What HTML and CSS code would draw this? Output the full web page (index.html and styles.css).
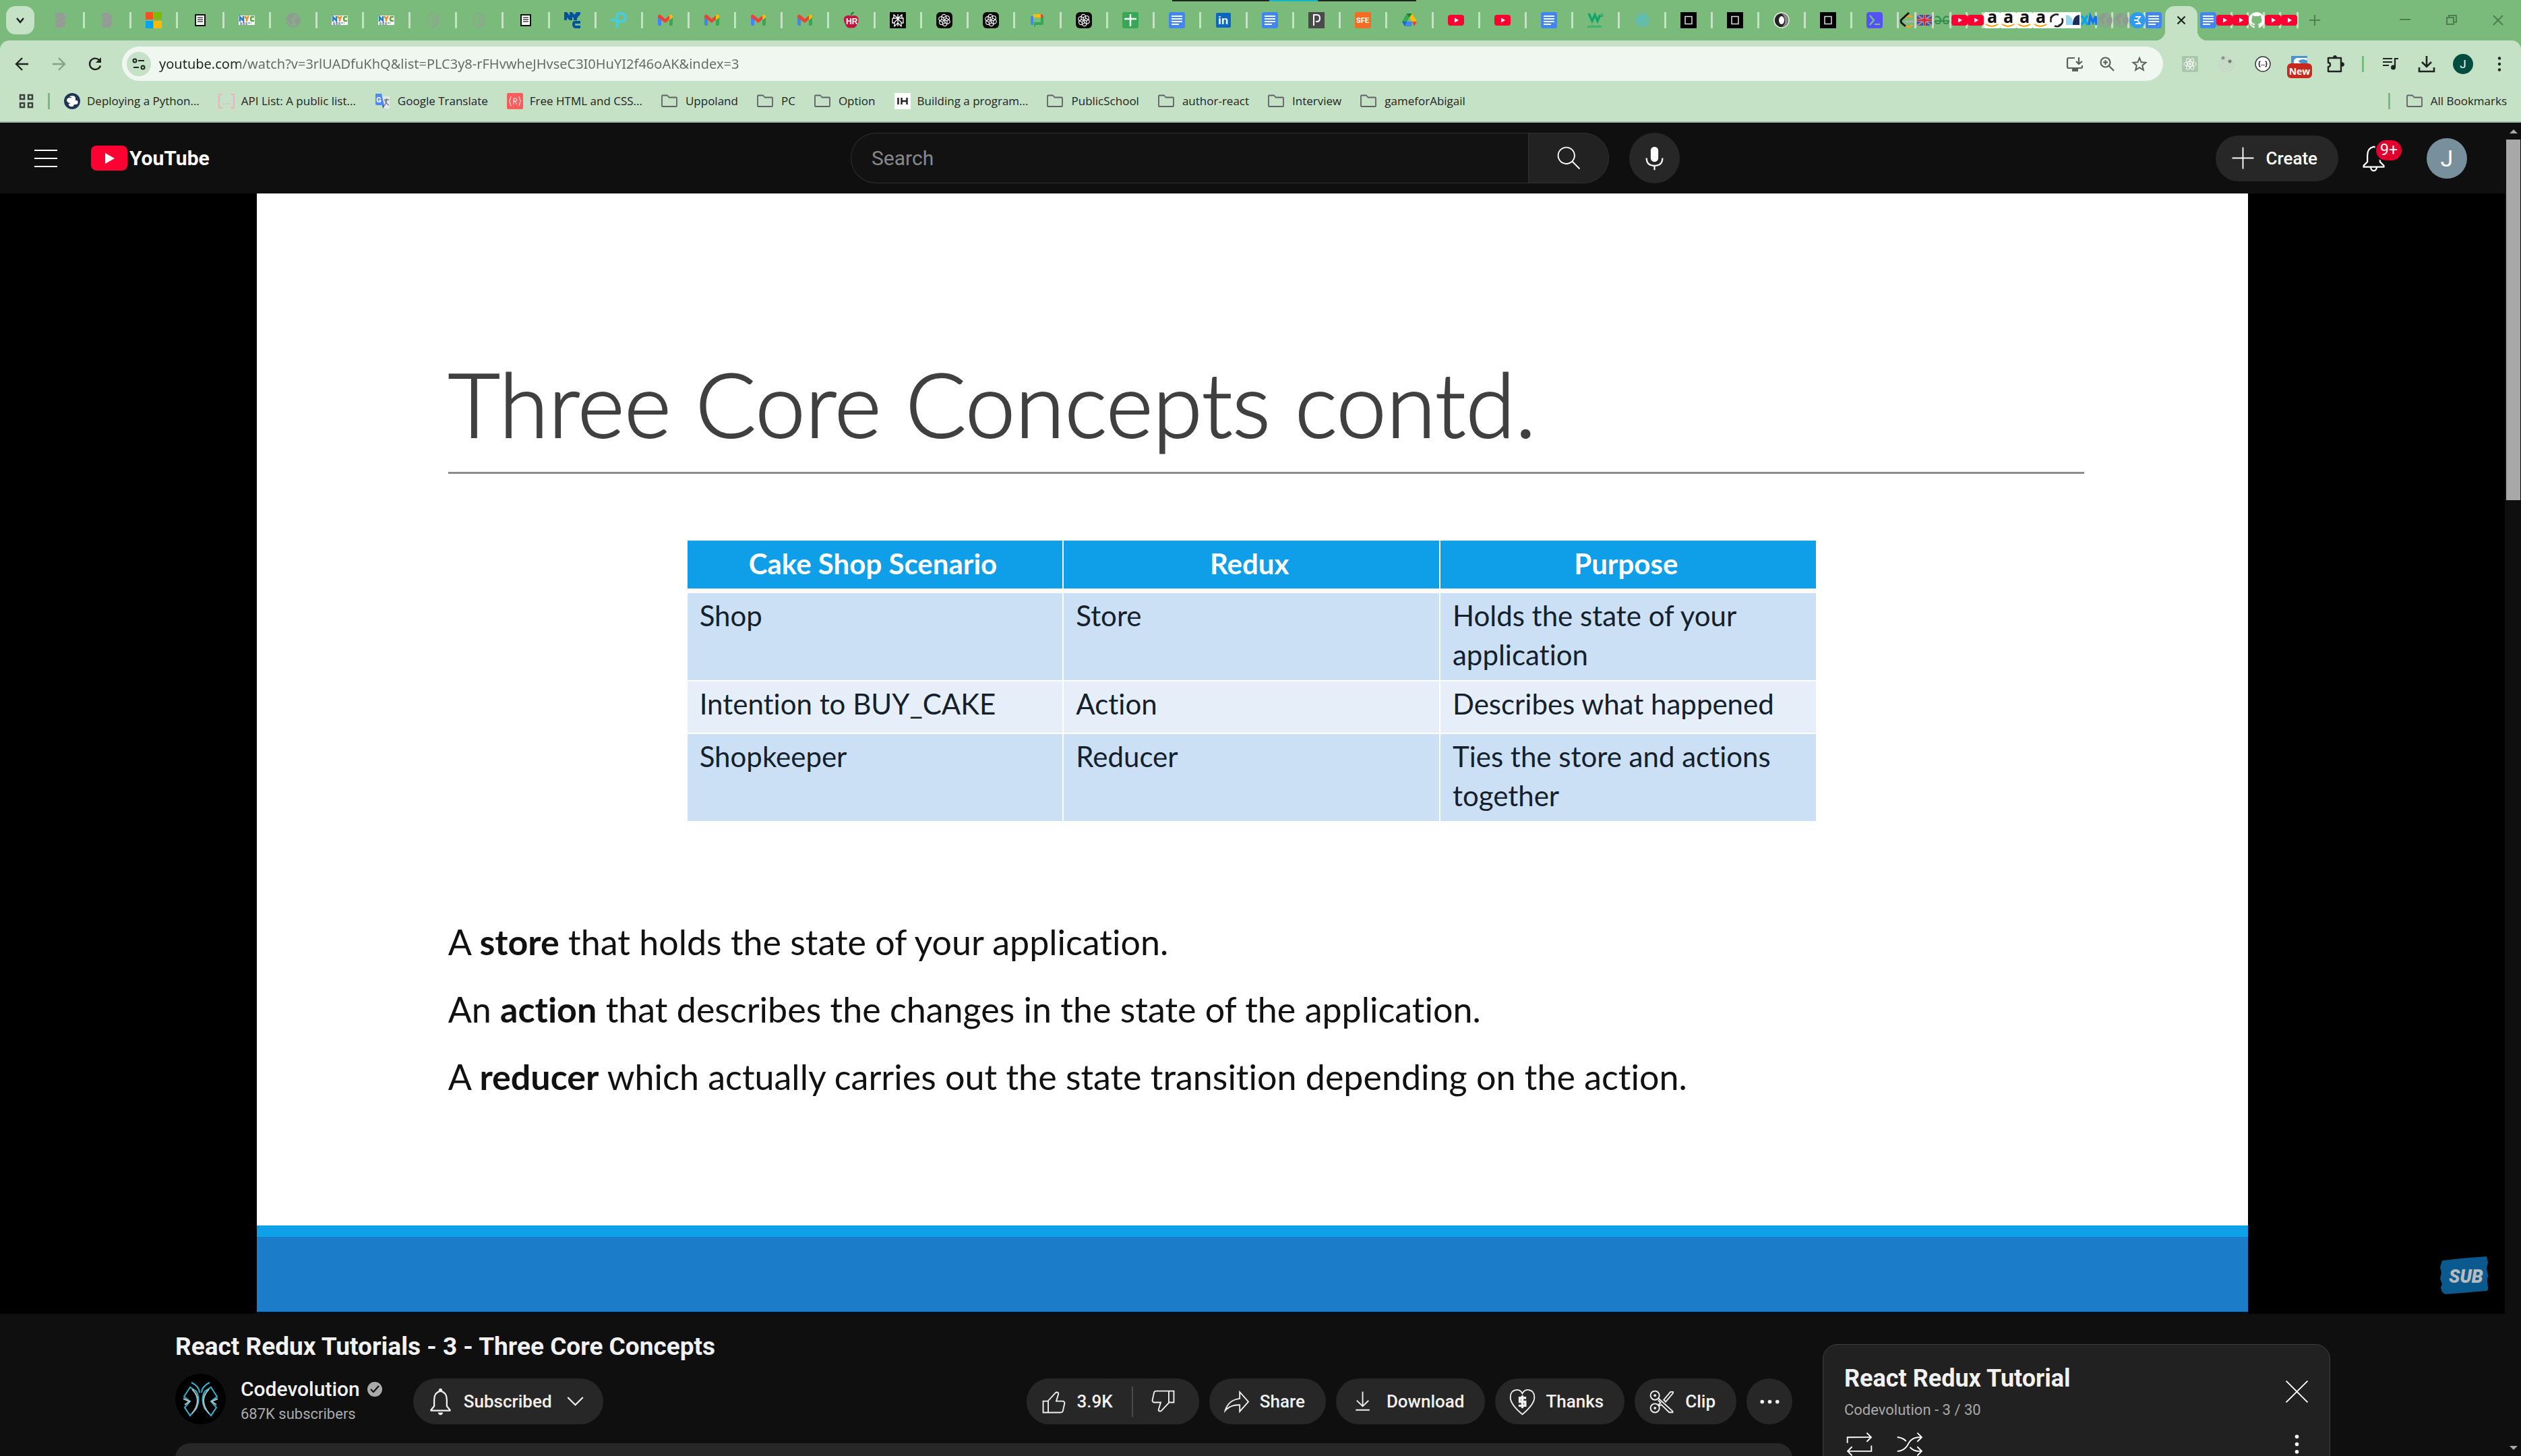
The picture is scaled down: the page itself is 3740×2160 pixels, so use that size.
FILE: index.html
```html
<!DOCTYPE html>
<html lang="en">
<head>
<meta charset="utf-8">
<title>React Redux Tutorials - 3 - Three Core Concepts</title>
<link rel="stylesheet" href="styles.css">
</head>
<body>
<svg class="defs" aria-hidden="true">
  <symbol id="f-b" viewBox="0 0 24 24"><path fill="#979b98" d="M4 1h11l4 4v5l-2 2 2 2v5l-4 4H4v-3l2-3-2-3 2-4-2-4z"/><path stroke="#7abb7c" d="M9 8l5-3M9 17l6-3"/></symbol>
  <symbol id="f-ms" viewBox="0 0 24 24"><path fill="#f25022" d="M0 0h11v11H0z"/><path fill="#7fba00" d="M12 0h12v11H12z"/><path fill="#00a4ef" d="M0 13h11v11H0z"/><path fill="#ffb900" d="M12 13h12v11H12z"/></symbol>
  <symbol id="f-page" viewBox="0 0 24 24"><path fill="#fff" stroke="#111" stroke-width="2" d="M5 4h14v16H5z"/><path stroke="#444" stroke-width="1.500" d="M8 8h8M8 11h8M8 14h8"/></symbol>
  <symbol id="f-nyc" viewBox="0 0 24 24"><path fill="#fff" d="M0 5h24v14H0z"/><path fill="none" stroke="#2a7fc4" stroke-width="2.600" d="M2 14V7l5 6V6"/><path fill="none" stroke="#f08a24" stroke-width="2.600" d="M9 6l3 4 3-4M12 9v5"/><path fill="none" stroke="#5aa83c" stroke-width="2.600" d="M23 7h-3q-2 0-2 3t2 3h3"/><path stroke="#3b4a86" stroke-width="1.200" d="M2 16h17M2 18h11" stroke-dasharray="3 1"/></symbol>
  <symbol id="f-globe" viewBox="0 0 24 24"><circle cx="12" cy="12" r="10" fill="#86ae87" stroke="#8f9b91" stroke-width="1.500"/><path fill="#8f9b91" d="M3 8l6-5 5 1-2 4-4 3 3 3-1 5-4-3zM15 8l5-1 2 6-4 6-3-3-2-3z"/></symbol>
  <symbol id="f-hex" viewBox="0 0 24 24"><path fill="none" stroke="#8ea690" stroke-width="1.500" d="M12 1l8 5v12l-8 5-8-5V6zM11 9l8-5M11 13l8-5M11 17l8-5M11 21l8-5"/></symbol>
  <symbol id="f-nyc2" viewBox="0 0 24 24"><path fill="#04529c" d="M0 0h4l4 5V0h4l3 4 3-4h6v3l-5 6v3h-5V9l-2-2v5H8L4 8v4H0z"/><path fill="none" stroke="#04529c" stroke-width="4" d="M24 15h-8q-2 0-2 3t2 4h8"/></symbol>
  <symbol id="f-p" viewBox="0 0 24 24"><path fill="none" stroke="#4acbd6" stroke-width="4" d="M9 24V6q0-4 5-4h2q6 0 6 6t-6 6h-5M0 12h9"/></symbol>
  <symbol id="f-gmail" viewBox="0 0 24 24"><path fill="#4285f4" d="M1 6l5 4v10H3q-2 0-2-2z"/><path fill="#34a853" d="M23 6l-5 4v10h3q2 0 2-2z"/><path fill="#ea4335" d="M1 6q1-4 5-1l6 5 6-5v6l-6 5-11-8z"/><path fill="#fbbc04" d="M18 5q4-3 5 1v2l-5 4z"/></symbol>
  <symbol id="f-hr" viewBox="0 0 24 24"><path fill="#c2123f" d="M2 7q5-4 10-1 6-3 10 2 2 5-2 12-4 5-8 3-5 2-8-3Q-1 12 2 7z"/><path stroke="#1d6b3a" stroke-width="2" d="M12 5q0-4 4-5" fill="none"/><text x="4" y="18" font-size="12" font-weight="700" fill="#fff" font-family="Liberation Sans">HR</text></symbol>
  <symbol id="f-perp" viewBox="0 0 24 24"><path d="M0 0h24v24H0z" fill="#0a0a0a"/><path fill="none" stroke="#fff" stroke-width="1.300" d="M12 3v18M6 4l6 5 6-5v5H6zM4 9h16v7h-3M4 9v7h3M12 10l-5 5v6l5-5 5 5v-6z"/></symbol>
  <symbol id="f-gpt" viewBox="0 0 24 24"><rect width="24" height="24" rx="6" fill="#0d0d0d"/><g fill="none" stroke="#fff" stroke-width="1.100"><path d="M11 12.500V8l4-2.300q4-1 4.500 3 0 1-.5 2.300l-4 2.300"/><path d="M11 12.500V8l4-2.300q4-1 4.500 3 0 1-.5 2.300l-4 2.300" transform="rotate(60 12 12)"/><path d="M11 12.500V8l4-2.300q4-1 4.500 3 0 1-.5 2.300l-4 2.300" transform="rotate(120 12 12)"/><path d="M11 12.500V8l4-2.300q4-1 4.500 3 0 1-.5 2.300l-4 2.300" transform="rotate(180 12 12)"/><path d="M11 12.500V8l4-2.300q4-1 4.500 3 0 1-.5 2.300l-4 2.300" transform="rotate(240 12 12)"/><path d="M11 12.500V8l4-2.300q4-1 4.500 3 0 1-.5 2.300l-4 2.300" transform="rotate(300 12 12)"/></g></symbol>
  <symbol id="f-chat" viewBox="0 0 24 24"><path fill="#4285f4" d="M2 6h4v13H4q-2 0-2-2z"/><path fill="#fbbc04" d="M6 3h11v5H6z"/><path fill="#ea4335" d="M17 3q4 0 4 5h-4z"/><path fill="#34a853" d="M17 8h4v9q0 2-2 2H10l-3 4v-8h10z"/></symbol>
  <symbol id="f-sheet" viewBox="0 0 24 24"><rect width="24" height="24" rx="3" fill="#34a853"/><path stroke="#fff" stroke-width="2.500" d="M3 10h18M12 3v18"/></symbol>
  <symbol id="f-doc" viewBox="0 0 24 24"><rect width="24" height="24" rx="3" fill="#4285f4"/><path stroke="#fff" stroke-width="2" d="M4 6h16M4 10h16M4 14h16M4 18h11"/></symbol>
  <symbol id="f-in" viewBox="0 0 24 24"><rect x="1" y="1" width="22" height="22" rx="2" fill="#0a66c2"/><text x="4" y="18" font-size="17" font-weight="700" fill="#fff" font-family="Liberation Sans">in</text></symbol>
  <symbol id="f-pp" viewBox="0 0 24 24"><path fill="#4a4a4a" d="M0 0h24v24H0z"/><path fill="none" stroke="#fff" stroke-width="2" d="M8 20V4h5q4 0 4 5t-4 5h-2"/></symbol>
  <symbol id="f-sfe" viewBox="0 0 24 24"><rect width="24" height="24" rx="2" fill="#f36d25"/><text x="2" y="16" font-size="11" font-weight="700" fill="#fff" font-family="Roboto">SFE</text></symbol>
  <symbol id="f-drive" viewBox="0 0 24 24"><path fill="#34a853" d="M8 2h4v5L5 20l-4-6z"/><path fill="#188038" d="M8 2h8l-4 6z"/><path fill="#fbbc04" d="M16 2l7 12h-7l-4-6z"/><path fill="#4285f4" d="M8 14h8l-1 7H5z"/><path fill="#ea4335" d="M16 14h7l-4 7z"/><path fill="#1967d2" d="M1 14h7l-3 7z"/></symbol>
  <symbol id="f-yt" viewBox="0 0 24 24"><rect y="4" width="24" height="16" rx="4" fill="#f03"/><path fill="#fff" d="M10 8.500v7l6-3.500z"/></symbol>
  <symbol id="f-w3" viewBox="0 0 24 24"><path fill="none" stroke="#12a66a" stroke-width="3.500" d="M2 2l5 11 4-9 4 9 4-9"/><text x="19" y="7" font-size="8" font-weight="700" fill="#12a66a" font-family="Roboto">3</text><text x="0" y="23" font-size="6" font-weight="700" fill="#12a66a" font-family="Roboto">schools</text></symbol>
  <symbol id="f-react" viewBox="0 0 24 24"><g fill="none" stroke="currentColor" stroke-width="1.200"><ellipse cx="12" cy="12" rx="11" ry="4.300"/><ellipse cx="12" cy="12" rx="11" ry="4.300" transform="rotate(60 12 12)"/><ellipse cx="12" cy="12" rx="11" ry="4.300" transform="rotate(120 12 12)"/></g><circle cx="12" cy="12" r="2.200" fill="currentColor"/></symbol>
  <symbol id="f-sq" viewBox="0 0 24 24"><path d="M0 0h24v24H0z"/><rect x="7" y="6.500" width="10" height="11" fill="none" stroke="#ddd" stroke-width="1.500"/></symbol>
  <symbol id="f-json" viewBox="0 0 24 24"><circle cx="12" cy="12" r="11" fill="#222" stroke="#eee" stroke-width="1.500"/><path fill="#888" d="M12 2a10 10 0 010 20q6-4 5-10-1-7-5-10z"/><ellipse cx="12" cy="12" rx="4" ry="6" fill="#fff"/></symbol>
  <symbol id="f-term" viewBox="0 0 24 24"><rect width="24" height="24" rx="4" fill="#5452f6"/><path fill="none" stroke="#79c77b" stroke-width="2.200" d="M5 5l6 7-6 7M12 18h8"/></symbol>
  <symbol id="f-leet" viewBox="0 0 24 24"><path fill="none" stroke="#ffa116" stroke-width="2.500" d="M10 20q5 5 10-1M10 8q5-5 10 0"/><path stroke="#b3b3b3" stroke-width="2.500" d="M9 14h13"/><path fill="none" stroke="#111" stroke-width="2.800" d="M15 1L4 11q-2 2 0 5l6 5"/></symbol>
  <symbol id="f-flag" viewBox="0 0 24 24"><path fill="#34549c" d="M1 4h22v16H1z"/><path stroke="#d9dbe0" stroke-width="2" d="M1 4l22 16M23 4L1 20"/><path stroke="#d9dbe0" stroke-width="4" d="M12 4v16M1 12h22"/><path stroke="#cf2a3a" stroke-width="3" d="M12 4v16M1 12h22"/><path stroke="#cf2a3a" d="M1 4l22 16M23 4L1 20"/></symbol>
  <symbol id="f-gg" viewBox="0 0 24 24"><path fill="none" stroke="#2f8d46" stroke-width="2" d="M2 7q8-2 8 6 0 4-4 4t-4-4h20q0 4-4 4t-4-4q0-8 8-6"/></symbol>
  <symbol id="f-amz" viewBox="0 0 24 24"><rect width="24" height="24" rx="3" fill="#fff"/><text x="5" y="16" font-size="25" font-weight="700" fill="#111" font-family="Open Sans">a</text><path fill="none" stroke="#ff9900" stroke-width="1.800" d="M3 18q9 6 18 0"/></symbol>
  <symbol id="f-sync" viewBox="0 0 24 24"><path fill="#fff" d="M0 0h24v24H0z"/><path fill="none" stroke="#222" stroke-width="2.500" d="M4 15A8.500 8.500 0 0115 4M9 20.500A8.500 8.500 0 0020 9M3 9q2-4 6-5M21 15q-2 4-6 5"/></symbol>
  <symbol id="f-m" viewBox="0 0 24 24"><path fill="#fff" d="M0 0h24v24H0z"/><path fill="#93d6f2" d="M2 4q9 1 10 10v5H2z"/><path fill="#1c2c5c" d="M12 19q0-14 10-15v15z"/></symbol>
  <symbol id="f-xm" viewBox="0 0 24 24"><path fill="none" stroke="#06a6ee" stroke-width="3.500" d="M1 5l9 14M10 5L1 19"/><path fill="none" stroke="#1673f0" stroke-width="3.500" d="M12 19l2-13 4 9 4-9 1 13"/></symbol>
  <symbol id="f-blue" viewBox="0 0 24 24"><circle cx="12" cy="12" r="12" fill="#2f9bf0"/><path fill="none" stroke="#fff" stroke-width="1.800" d="M9 7h7l-4 5 4 5H9M7 12h5"/></symbol>
  <symbol id="f-git" viewBox="0 0 24 24"><path fill="#fff" d="M12 0a12 12 0 00-4 23.400c.6.100.8-.3.800-.6v-2.200c-3.300.7-4-1.400-4-1.400-.6-1.400-1.400-1.800-1.400-1.800-1-.7.100-.7.100-.7 1.200.1 1.900 1.200 1.900 1.200 1 1.800 2.800 1.300 3.500 1 .1-.8.400-1.300.8-1.600-2.700-.3-5.500-1.300-5.500-5.900 0-1.300.5-2.400 1.200-3.200-.1-.3-.5-1.500.1-3.200 0 0 1-.3 3.300 1.200a11.500 11.500 0 016 0c2.300-1.500 3.300-1.200 3.300-1.200.7 1.700.2 2.900.1 3.200.8.800 1.200 1.900 1.200 3.200 0 4.600-2.800 5.600-5.500 5.900.4.400.8 1.100.8 2.200v3.300c0 .3.200.7.800.6A12 12 0 0012 0z"/></symbol>
  <symbol id="i-folder" viewBox="0 0 24 24"><path fill="none" stroke="#5f6368" stroke-width="1.800" stroke-linejoin="round" d="M1 4.500q0-1 1-1h7l2.500 3H22q1 0 1 1V19q0 1-1 1H2q-1 0-1-1z"/></symbol>
  <symbol id="i-like" viewBox="0 0 24 24"><path fill="currentColor" fill-rule="evenodd" d="M18.770 11h-4.230l1.520-4.940C16.380 5.030 15.540 4 14.380 4c-.58 0-1.140.24-1.520.65L7 11H3v10h14.430c1.060 0 1.980-.67 2.190-1.610l1.340-6C21.230 12.150 20.180 11 18.770 11zM7 20H4v-8h3v8zm12.980-6.830l-1.340 6c-.1.480-.61.830-1.210.83H8v-8.610l5.600-6.060c.19-.21.480-.33.780-.33.260 0 .5.110.63.300.07.100.15.260.09.470l-1.520 4.940-.4 1.290h5.580c.41 0 .8.170 1.030.46.130.15.260.4.190.71z"/></symbol>
</svg>

<header class="browser">
  <div class="screen-edge"></div>
  <div class="tabstrip">
    <button class="tab-search" aria-label="Search tabs"><svg width="14" height="14" viewBox="0 0 14 14"><path fill="none" stroke="#1f1f1f" stroke-width="2.500" d="M2 4l5 6 5-6"/></svg></button>
    <ul class="tabs">
      <li class="tab"><svg><use href="#f-b"/></svg></li>
      <li class="tab"><svg><use href="#f-b"/></svg></li>
      <li class="tab"><svg><use href="#f-ms"/></svg></li>
      <li class="tab"><svg><use href="#f-page"/></svg></li>
      <li class="tab"><svg><use href="#f-nyc"/></svg></li>
      <li class="tab"><svg><use href="#f-globe"/></svg></li>
      <li class="tab"><svg><use href="#f-nyc"/></svg></li>
      <li class="tab"><svg><use href="#f-nyc"/></svg></li>
      <li class="tab"><svg><use href="#f-hex"/></svg></li>
      <li class="tab"><svg><use href="#f-hex"/></svg></li>
      <li class="tab"><svg><use href="#f-page"/></svg></li>
      <li class="tab"><svg><use href="#f-nyc2"/></svg></li>
      <li class="tab"><svg><use href="#f-p"/></svg></li>
      <li class="tab"><svg><use href="#f-gmail"/></svg></li>
      <li class="tab"><svg><use href="#f-gmail"/></svg></li>
      <li class="tab"><svg><use href="#f-gmail"/></svg></li>
      <li class="tab"><svg><use href="#f-gmail"/></svg></li>
      <li class="tab"><svg><use href="#f-hr"/></svg></li>
      <li class="tab"><svg><use href="#f-perp"/></svg></li>
      <li class="tab"><svg><use href="#f-gpt"/></svg></li>
      <li class="tab"><svg><use href="#f-gpt"/></svg></li>
      <li class="tab"><svg><use href="#f-chat"/></svg></li>
      <li class="tab"><svg><use href="#f-gpt"/></svg></li>
      <li class="tab"><svg><use href="#f-sheet"/></svg></li>
      <li class="tab"><svg><use href="#f-doc"/></svg></li>
      <li class="tab"><svg><use href="#f-in"/></svg></li>
      <li class="tab"><svg><use href="#f-doc"/></svg></li>
      <li class="tab"><svg><use href="#f-pp"/></svg></li>
      <li class="tab"><svg><use href="#f-sfe"/></svg></li>
      <li class="tab"><svg><use href="#f-drive"/></svg></li>
      <li class="tab"><svg><use href="#f-yt"/></svg></li>
      <li class="tab"><svg><use href="#f-yt"/></svg></li>
      <li class="tab"><svg><use href="#f-doc"/></svg></li>
      <li class="tab"><svg><use href="#f-w3"/></svg></li>
      <li class="tab sky"><svg><use href="#f-react"/></svg></li>
      <li class="tab"><svg><use href="#f-sq"/></svg></li>
      <li class="tab"><svg><use href="#f-sq"/></svg></li>
      <li class="tab"><svg><use href="#f-json"/></svg></li>
      <li class="tab"><svg><use href="#f-sq"/></svg></li>
      <li class="tab"><svg><use href="#f-term"/></svg></li>
      <li class="tab mid"><svg><use href="#f-leet"/></svg></li>
      <li class="tab mid"><svg><use href="#f-flag"/></svg></li>
      <li class="tab mid"><svg><use href="#f-gg"/></svg></li>
      <li class="tab slim"><svg><use href="#f-yt"/></svg></li>
      <li class="tab slim"><svg><use href="#f-yt"/></svg></li>
      <li class="tab slim"><svg><use href="#f-amz"/></svg></li>
      <li class="tab slim"><svg><use href="#f-amz"/></svg></li>
      <li class="tab slim"><svg><use href="#f-amz"/></svg></li>
      <li class="tab slim"><svg><use href="#f-amz"/></svg></li>
      <li class="tab slim"><svg><use href="#f-sync"/></svg></li>
      <li class="tab slim"><svg><use href="#f-m"/></svg></li>
      <li class="tab slim"><svg><use href="#f-xm"/></svg></li>
      <li class="tab slim"><svg><use href="#f-globe"/></svg></li>
      <li class="tab slim"><svg><use href="#f-globe"/></svg></li>
      <li class="tab slim"><svg><use href="#f-blue"/></svg></li>
      <li class="tab slim before-active"><svg><use href="#f-doc"/></svg></li>
      <li class="tab active"><button aria-label="Close tab"><svg viewBox="0 0 24 24"><path stroke="#1f1f1f" stroke-width="2.200" d="M6.500 6.500l11 11M17.500 6.500l-11 11"/></svg></button></li>
      <li class="tab slim"><svg><use href="#f-doc"/></svg></li>
      <li class="tab slim"><svg><use href="#f-yt"/></svg></li>
      <li class="tab slim"><svg><use href="#f-yt"/></svg></li>
      <li class="tab slim"><svg><use href="#f-git"/></svg></li>
      <li class="tab slim"><svg><use href="#f-yt"/></svg></li>
      <li class="tab mid"><svg><use href="#f-yt"/></svg></li>
    </ul>
    <button class="new-tab" aria-label="New tab"><svg width="16" height="16" viewBox="0 0 16 16"><path stroke="#4c7f50" stroke-width="2" d="M8 0v16M0 8h16"/></svg></button>
    <div class="window-controls">
      <button aria-label="Minimize"><svg width="16" height="16" viewBox="0 0 16 16"><path stroke="#4c7f50" stroke-width="2" d="M0 7h16"/></svg></button>
      <button aria-label="Restore"><svg width="16" height="16" viewBox="0 0 16 16"><path fill="none" stroke="#4c7f50" stroke-width="2" d="M1 4h10v10H1zM4 4V1h11v10h-4"/></svg></button>
      <button aria-label="Close"><svg width="16" height="16" viewBox="0 0 16 16"><path stroke="#4c7f50" stroke-width="2" d="M1 1l14 14M15 1L1 15"/></svg></button>
    </div>
  </div>

  <div class="toolbar">
    <button class="tool" aria-label="Back"><svg width="24" height="24" viewBox="0 0 24 24"><path fill="none" stroke="#1f2420" stroke-width="2.400" d="M21 12H4M12 3l-9 9 9 9"/></svg></button>
    <button class="tool" aria-label="Forward"><svg width="24" height="24" viewBox="0 0 24 24"><path fill="none" stroke="#84a287" stroke-width="2.400" d="M3 12h17M12 3l9 9-9 9"/></svg></button>
    <button class="tool" aria-label="Reload"><svg width="24" height="24" viewBox="0 0 24 24"><path fill="none" stroke="#1f2420" stroke-width="2.400" d="M20 14.500a8.200 8.200 0 11-2-8.500l2 2"/><path fill="#1f2420" d="M21 2v8h-8z"/></svg></button>
    <div class="omnibox">
      <button class="site-info" aria-label="Site information"><svg width="20" height="20" viewBox="0 0 20 20"><g fill="none" stroke="#1f2420" stroke-width="2"><circle cx="4" cy="5" r="2.500"/><path d="M9 5h9M2 15h8"/><circle cx="16" cy="15" r="2.500"/></g></svg></button>
      <input class="url" type="text" aria-label="Address" value="youtube.com/watch?v=3rlUADfuKhQ&amp;list=PLC3y8-rFHvwheJHvseC3I0HuYI2f46oAK&amp;index=3">
      <button class="omni-btn" aria-label="Install"><svg width="26" height="24" viewBox="0 0 26 24"><path fill="none" stroke="#5a5f5b" stroke-width="2.200" d="M13 3H4q-2 0-2 2v11q0 2 2 2h18q2 0 2-2v-2M19 2v9M15 8l4 4 5-4"/><path fill="#5a5f5b" d="M9 18h9v5H9z"/></svg></button>
      <button class="omni-btn" aria-label="Zoom"><svg width="24" height="24" viewBox="0 0 24 24"><g fill="none" stroke="#5a5f5b" stroke-width="2.200"><circle cx="9.500" cy="9.500" r="7"/><path d="M14.500 14.500l7.500 7.500M6 9.500h7M9.500 6v7"/></g></svg></button>
      <button class="omni-btn" aria-label="Bookmark this tab"><svg width="24" height="24" viewBox="0 0 24 24"><path fill="none" stroke="#5a5f5b" stroke-width="2" d="M12 3l2.600 6.300 6.800.5-5.200 4.400 1.600 6.600-5.800-3.600-5.800 3.600 1.600-6.600-5.200-4.400 6.800-.5z"/></svg></button>
    </div>
    <button class="tool" aria-label="React Developer Tools"><svg class="react-ext" width="24" height="24" viewBox="0 0 24 24"><rect width="24" height="24" rx="2" fill="#a9c8ab"/><use href="#f-react" x="2" y="2" width="20" height="20"/></svg></button>
    <button class="tool" aria-label="Extension"><svg width="24" height="24" viewBox="0 0 24 24"><g fill="none" stroke="#c9cfcb" stroke-width="1.500" stroke-dasharray="5 1"><circle cx="12" cy="13" r="10.500"/><circle cx="12" cy="13" r="6"/></g><circle cx="12" cy="13" r="2.500" fill="#cfd2d0"/><circle cx="7" cy="3" r="2.500" fill="#8f9490"/><circle cx="17" cy="8" r="2.500" fill="#767b77"/></svg></button>
    <button class="tool" aria-label="JSON viewer"><svg width="24" height="24" viewBox="0 0 24 24"><circle cx="12" cy="12" r="11" fill="#fff" stroke="#3a3d3b" stroke-width="1.500"/><path fill="none" stroke="#222" stroke-width="1.500" d="M8.500 8q-2 0-1.800 2 .2 2-1.200 2 1.400 0 1.200 2-.2 2 1.800 2M15.500 8q2 0 1.800 2-.2 2 1.200 2-1.400 0-1.200 2 .2 2-1.800 2M9.500 13.500h1.200M11.700 13.500h1.200M13.700 13.500h1"/></svg></button>
    <button class="tool ext-new" aria-label="Extension with update"><svg width="24" height="24" viewBox="0 0 24 24"><path fill="#fff" stroke="#8aa9c4" d="M0 0h24v24H0z"/><path fill="#4b93cf" d="M0 0h24v3H8q-5 2-4 8H0zM24 11h-8q-5-1-5-4 7-4 13 0z"/></svg><span class="badge-new">New</span></button>
    <button class="tool" aria-label="Extensions"><svg width="26" height="26" viewBox="0 0 26 26"><path fill="none" stroke="#1f2420" stroke-width="2.400" stroke-linejoin="round" d="M4 4h17v20H2v-7q3 0 3-3t-3-3V4h3"/><path fill="#1f2420" d="M9 4q0-4 3-4t3 4zM21 10q5 0 5 3.500T21 17z"/></svg></button>
    <span class="divider"></span>
    <button class="tool" aria-label="Media controls"><svg width="24" height="24" viewBox="0 0 24 24"><path fill="none" stroke="#1f2420" stroke-width="2.200" d="M1 4h14M1 9h14M1 14h9M19 17V4h5"/><circle cx="16.500" cy="17" r="3.500" fill="#1f2420"/></svg></button>
    <button class="tool" aria-label="Downloads"><svg width="26" height="26" viewBox="0 0 26 26"><path fill="none" stroke="#1f2420" stroke-width="2.600" d="M13 1v15M6 10l7 7 7-7M2 18v6h22v-6"/></svg></button>
    <button class="tool" aria-label="Profile"><span class="profile">J</span></button>
    <button class="tool" aria-label="Menu"><svg width="24" height="24" viewBox="0 0 24 24" fill="#1f2420"><circle cx="12" cy="3.500" r="2.200"/><circle cx="12" cy="12" r="2.200"/><circle cx="12" cy="20.500" r="2.200"/></svg></button>
  </div>

  <nav class="bookmarks" aria-label="Bookmarks">
    <button class="apps" aria-label="Apps"><svg width="22" height="22" viewBox="0 0 22 22"><path fill="none" stroke="#3a423c" stroke-width="2.400" d="M2 2h6v6H2zM14 2h6v6h-6zM2 14h6v6H2zM14 14h6v6h-6z"/></svg></button>
    <span class="bm-divider"></span>
    <a href="#" class="bm"><svg viewBox="0 0 24 24"><circle cx="12" cy="12" r="12" fill="#1d3557"/><path fill="#fff" d="M12 4q5 0 5 4v3h3q2 6-3 6h-2q-1 4-5 3-4-1-3-4l3-1q-5 0-6-4 0-3 3-4h4V6H8q1-2 4-2z"/></svg>Deploying a Python...</a>
    <a href="#" class="bm"><svg viewBox="0 0 24 24"><path fill="none" stroke="#f0b0c4" stroke-width="2" d="M6 2H1v20h5M18 2h5v20h-5"/><path stroke="#f0b0c4" stroke-width="2" stroke-dasharray="2 2" d="M7 16h11"/></svg>API List: A public list...</a>
    <a href="#" class="bm"><svg viewBox="0 0 24 24"><path fill="#e4e8ec" d="M10 5h12v18H14z"/><path fill="#4b8af5" d="M1 1h9l4 17H3q-2 0-2-2z"/><path fill="#3a5bc0" d="M11 18h4l-3 5z"/><text x="2" y="14" font-size="11" font-weight="700" fill="#fff" font-family="Roboto">G</text><path stroke="#6b7880" stroke-width="1.300" fill="none" d="M14 10h7M17.500 8v2q0 5-3 8M15 11q2 5 6 7"/></svg>Google Translate</a>
    <a href="#" class="bm"><svg viewBox="0 0 24 24"><rect width="24" height="24" rx="2" fill="#fb5b5b"/><path fill="none" stroke="#fff" d="M7 5q-2 0-2 3 0 4-2 4 2 0 2 4 0 3 2 3M17 5q2 0 2 3 0 4 2 4-2 0-2 4 0 3-2 3M10 17V8h3q2 0 2 2t-2 2h-3 2l3 5"/></svg>Free HTML and CSS...</a>
    <a href="#" class="bm folder"><svg><use href="#i-folder"/></svg>Uppoland</a>
    <a href="#" class="bm folder"><svg><use href="#i-folder"/></svg>PC</a>
    <a href="#" class="bm folder"><svg><use href="#i-folder"/></svg>Option</a>
    <a href="#" class="bm"><svg viewBox="0 0 24 24"><path fill="#fff" d="M0 0h24v24H0z"/><path stroke="#222" stroke-width="2.500" d="M5.500 7v10M10.500 7v10M18.500 7v10M10 12h9"/></svg>Building a program...</a>
    <a href="#" class="bm folder"><svg><use href="#i-folder"/></svg>PublicSchool</a>
    <a href="#" class="bm folder"><svg><use href="#i-folder"/></svg>author-react</a>
    <a href="#" class="bm folder"><svg><use href="#i-folder"/></svg>Interview</a>
    <a href="#" class="bm folder"><svg><use href="#i-folder"/></svg>gameforAbigail</a>
    <span class="bm-divider push"></span>
    <a href="#" class="bm folder"><svg><use href="#i-folder"/></svg>All Bookmarks</a>
  </nav>
</header>

<div class="viewport">
  <div class="page">
    <header class="masthead">
      <div class="start">
        <button class="guide" aria-label="Guide"><svg width="36" height="28" viewBox="0 0 36 28"><path stroke="#fff" stroke-width="2" d="M1 2h34M1 14h34M1 26h34"/></svg></button>
        <a class="logo" href="#"><svg width="54" height="37" viewBox="0 0 54 37"><rect width="54" height="37" rx="8" fill="#f03"/><path fill="#fff" d="M21 11v16l14-8z"/></svg>YouTube</a>
      </div>
      <form class="search">
        <input type="search" placeholder="Search" aria-label="Search">
        <button type="button" class="go" aria-label="Search"><svg width="45" height="45" viewBox="0 0 24 24"><path fill="#fff" fill-rule="evenodd" d="M20.870 20.170l-5.590-5.590C16.350 13.350 17 11.750 17 10c0-3.870-3.130-7-7-7s-7 3.130-7 7 3.130 7 7 7c1.750 0 3.350-.65 4.580-1.710l5.590 5.590.7-.71zM10 16c-3.310 0-6-2.690-6-6s2.690-6 6-6 6 2.690 6 6-2.690 6-6 6z"/></svg></button>
        <button type="button" class="mic" aria-label="Search with your voice"><svg width="45" height="45" viewBox="0 0 24 24"><rect x="9" y="3" width="6" height="12" rx="3" fill="#fff"/><path fill="none" stroke="#fff" stroke-width="1.200" d="M5.700 12q0 6 6.300 6t6.300-6M12 18v3.500"/></svg></button>
      </form>
      <div class="end">
        <button class="create"><svg width="45" height="45" viewBox="0 0 24 24"><path stroke="#fff" d="M12 3.500v17M3.500 12h17"/></svg>Create</button>
        <button class="bell" aria-label="Notifications"><svg width="45" height="45" viewBox="0 0 24 24"><path fill="none" stroke="#fff" stroke-width="1.200" stroke-linejoin="round" d="M12 3q-5 1-5 7v5l-3 3v1h16v-1l-3-3v-5q0-6-5-7zM9.500 19q.5 3 2.500 3t2.500-3"/></svg><span class="count">9+</span></button>
        <button class="me" aria-label="Account">J</button>
      </div>
    </header>

    <section class="theater" aria-label="Video player">
      <article class="slide">
        <h2>Three Core Concepts contd.</h2>
        <table>
          <thead><tr><th>Cake Shop Scenario</th><th>Redux</th><th>Purpose</th></tr></thead>
          <tbody>
            <tr><td>Shop</td><td>Store</td><td>Holds the state of your application</td></tr>
            <tr><td>Intention to BUY_CAKE</td><td>Action</td><td>Describes what happened</td></tr>
            <tr><td>Shopkeeper</td><td>Reducer</td><td>Ties the store and actions together</td></tr>
          </tbody>
        </table>
        <div class="points">
          <p>A <b>store</b> that holds the state of your application.</p>
          <p>An <b>action</b> that describes the changes in the state of the application.</p>
          <p>A <b>reducer</b> which actually carries out the state transition depending on the action.</p>
        </div>
        <div class="band"></div>
      </article>
      <svg class="watermark" width="72" height="56" viewBox="0 0 72 56"><path fill="#0b5a8f" d="M3 6l10-1 8-1 20-2 28-2 2 9-2 8 2 10-1 9 1 11-1 4-14 1-22 2-26 2-5-3-2-7 2-5-3-8 2-9-2-8z"/><text x="13" y="39" font-family="Roboto" font-weight="900" font-style="italic" font-size="27" fill="#b9bcbe">SUB</text></svg>
    </section>

    <main class="below">
      <div class="primary">
        <h1>React Redux Tutorials - 3 - Three Core Concepts</h1>
        <div class="meta">
          <svg class="avatar" width="75" height="75" viewBox="0 0 75 75"><circle cx="37.500" cy="37.500" r="37.500" fill="#000"/><g fill="none" stroke-width="2"><path stroke="#2fb4cf" d="M24 13q12 6 12 15M51 13q-12 6-12 15M22 20L13 34l9 7-8 9 8 12 9-10q7-15 0-26zM53 20l9 14-9 7 8 9-8 12-9-10q-7-15 0-26z"/><path stroke="#b8bec0" d="M25 23q16 16 0 36M50 23q-16 16 0 36M12 37l9 4-7 5M63 37l-9 4 7 5"/></g></svg>
          <div class="owner">
            <a href="#" class="channel">Codevolution<svg width="22" height="22" viewBox="0 0 22 22"><circle cx="11" cy="11" r="11" fill="#aaa"/><path fill="none" stroke="#0f0f0f" stroke-width="2.200" d="M5 11l4 4 8-9"/></svg></a>
            <span class="subs">687K subscribers</span>
          </div>
          <button class="pill subscribed"><svg viewBox="0 0 24 24"><path fill="none" stroke="#f1f1f1" stroke-width="1.200" stroke-linejoin="round" d="M12 3.500q-5 1-5 7v5l-2.500 3v.5h15v-.5L17 15.500v-5q0-6-5-7z"/><path fill="#f1f1f1" d="M10.500 3.500q0-2 1.500-2t1.500 2zM10 20.500h4q-.5 2-2 2t-2-2z"/></svg>Subscribed<svg viewBox="0 0 24 24"><path fill="none" stroke="#f1f1f1" stroke-width="1.200" d="M6 8.500l6 6 6-6"/></svg></button>
          <div class="actions">
            <div class="rate">
              <button class="pill like"><svg><use href="#i-like"/></svg>3.9K</button>
              <button class="pill dislike" aria-label="Dislike"><svg><use href="#i-like"/></svg></button>
            </div>
            <button class="pill"><svg viewBox="0 0 24 24"><path fill="#f1f1f1" fill-rule="evenodd" d="M15 5.630L20.660 12 15 18.370V14h-1c-3.960 0-7.140 1-9.750 3.090 1.840-4.070 5.110-6.400 9.890-7.100l.86-.13V5.630M14 3v6C6.220 10.130 3.110 15.330 2 21c2.780-3.970 6.440-6 12-6v6l8-9-8-9z"/></svg>Share</button>
            <button class="pill"><svg viewBox="0 0 24 24"><path fill="#f1f1f1" d="M17 18v1H6v-1h11zm-.5-6.600l-.7-.7-3.800 3.700V4h-1v10.400l-3.800-3.800-.7.7 5 5 5-4.900z"/></svg>Download</button>
            <button class="pill"><svg viewBox="0 0 24 24"><path fill="none" stroke="#f1f1f1" d="M12 22Q2.500 14 2.500 8.500 2.500 3 7.500 2.600 10.500 2.500 12 5.500q1.500-3 4.500-2.900 5 .4 5 5.900Q21.500 14 12 22z"/><path fill="none" stroke="#f1f1f1" stroke-width="1.800" d="M15 8.900H9.900V12h4.400v3.100H9M12 7v10"/></svg>Thanks</button>
            <button class="pill"><svg viewBox="0 0 24 24"><g fill="none" stroke="#f1f1f1"><circle cx="6.500" cy="7" r="3.500"/><circle cx="6.500" cy="17" r="3.500"/><path d="M9.300 9.300L20.500 19.500v.9h-2.700l-6.300-6.100-2.200 1.100M9.200 14.500L11 12.800l-2-2M13.500 10.500L18.800 4.200h2v1L15 12z"/></g><circle cx="6.500" cy="7" r="1" fill="#f1f1f1"/><circle cx="6.500" cy="17" r="1" fill="#f1f1f1"/></svg>Clip</button>
            <button class="pill more" aria-label="More actions"><svg viewBox="0 0 24 24" fill="#f1f1f1"><circle cx="6" cy="12" r="1.500"/><circle cx="12" cy="12" r="1.500"/><circle cx="18" cy="12" r="1.500"/></svg></button>
          </div>
        </div>
        <div class="description"></div>
      </div>
      <aside class="playlist">
        <div class="pl-head">
          <div>
            <h3>React Redux Tutorial</h3>
            <p>Codevolution - 3 / 30</p>
          </div>
          <button class="icon" aria-label="Close"><svg viewBox="0 0 24 24"><path stroke="#fff" d="M3.500 3.500l17 17M20.500 3.500l-17 17"/></svg></button>
        </div>
        <div class="pl-tools">
          <button class="icon" aria-label="Loop playlist"><svg viewBox="0 0 24 24"><path fill="#fff" d="M21 13h1v5l-18.070.030 2.620 2.620-.71.710L1.990 17.500l3.850-3.850.71.710-2.670 2.670L21 17v-4zM3 7l17.120-.030-2.670 2.670.71.710 3.850-3.850-3.850-3.850-.71.710 2.620 2.620L2 6v5h1V7z"/></svg></button>
          <button class="icon" aria-label="Shuffle playlist"><svg viewBox="0 0 24 24"><path fill="#fff" d="M18.150 13.650L22 17.500l-3.850 3.850-.71-.71L20.090 18H19c-2.840 0-5.530-1.230-7.390-3.380l.76-.65C14.030 15.890 16.450 17 19 17h1.090l-2.650-2.650.71-.7zM19 7h1.090l-2.650 2.650.71.710L22 6.500l-3.850-3.850-.71.710L20.090 6H19c-3.580 0-6.860 1.950-8.570 5.090l-.73 1.340C8.160 15.250 5.210 17 2 17v1c3.580 0 6.860-1.950 8.570-5.090l.73-1.340C12.840 8.750 15.790 7 19 7zM8.590 9.980l.75-.66C7.490 7.210 4.810 6 2 6v1c2.520 0 4.920 1.090 6.590 2.980z"/></svg></button>
          <button class="icon menu" aria-label="Playlist menu"><svg viewBox="0 0 24 24" fill="#fff"><circle cx="12" cy="6" r="1.500"/><circle cx="12" cy="12" r="1.500"/><circle cx="12" cy="18" r="1.500"/></svg></button>
        </div>
      </aside>
    </main>
  </div>
  <div class="scrollbar" aria-hidden="true">
    <svg width="12" height="6" viewBox="0 0 12 6"><path fill="#a8a8a8" d="M6 0l6 6H0z"/></svg>
    <div class="thumb"></div>
    <svg width="12" height="6" viewBox="0 0 12 6"><path fill="#a8a8a8" d="M6 6l6-6H0z"/></svg>
  </div>
</div>
</body>
</html>
```
FILE: styles.css
```css
* { box-sizing: border-box; }

body {
  margin: 0;
  height: 100vh;
  overflow: hidden;
  display: flex;
  flex-direction: column;
  background: #0f0f0f;
  color: #f1f1f1;
  font-family: Roboto, sans-serif;
}

button {
  border: 0;
  padding: 0;
  margin: 0;
  background: none;
  color: inherit;
  font: inherit;
  display: flex;
  align-items: center;
  justify-content: center;
}

a { color: inherit; text-decoration: none; }
h1, h2, h3, p, ul { margin: 0; padding: 0; }
svg { display: block; flex: none; }
.defs { display: none; }

/* Browser chrome */
.browser {
  position: relative;
  background: #7abb7c;
  border-bottom: 2px solid #a3bba4;
}

.screen-edge {
  position: absolute;
  top: 0;
  left: 1739px;
  width: 362px;
  height: 2px;
  background: linear-gradient(90deg, #1f2420 144px, #12b5cb 144px 216px, #1f2420 216px);
}

.tabstrip {
  height: 60px;
  display: flex;
  align-items: center;
  padding-left: 9px;
}

.tab-search {
  width: 42px;
  height: 42px;
  border-radius: 14px;
  background: #c5e1c6;
  margin-right: 6px;
}

.tabs { display: flex; list-style: none; align-items: center; }

.tab {
  width: 69px;
  height: 24px;
  display: flex;
  justify-content: center;
  border-right: 3px solid #c5e1c6;
}

.tab svg { width: 24px; height: 24px; }
.tab.sky { color: #4fc0d8; }
.tab.mid { width: 26px; justify-content: flex-start; }
.tab.slim { width: 24px; justify-content: flex-start; }
.tab.before-active { margin-right: 5px; border-color: transparent; }

.tab.active {
  position: relative;
  width: 48px;
  height: 51px;
  margin: 9px 4px 0 0;
  border: 0;
  border-radius: 14px 14px 0 0;
  background: #c5e1c6;
  align-items: center;
  padding-bottom: 9px;
}

.tab.active::before,
.tab.active::after {
  content: "";
  position: absolute;
  bottom: 0;
  width: 14px;
  height: 14px;
}
.tab.active::before { right: 100%; background: radial-gradient(circle at 0 0, transparent 14px, #c5e1c6 14px); }
.tab.active::after { left: 100%; background: radial-gradient(circle at 100% 0, transparent 14px, #c5e1c6 14px); }

.new-tab { width: 48px; height: 48px; }

.window-controls { display: flex; margin-left: auto; }
.window-controls button { width: 69px; height: 60px; }

.toolbar {
  display: flex;
  align-items: center;
  height: 60px;
  padding: 9px 5px 0 6px;
  background: #c5e1c6;
  border-radius: 14px 14px 0 0;
}

.tool { width: 54px; height: 51px; flex: none; }

.omnibox {
  flex: 1;
  display: flex;
  align-items: center;
  height: 51px;
  margin: 0 13px;
  padding: 0 11px 0 7px;
  border-radius: 26px;
  background: #f0f7f0;
}

.site-info {
  width: 36px;
  height: 36px;
  border-radius: 50%;
  background: #c5e1c6;
  margin-right: 12px;
}

.url {
  flex: 1;
  border: 0;
  outline: 0;
  padding: 0;
  height: 36px;
  font: 20px/36px "Noto Sans", sans-serif;
  color: transparent;
  background: linear-gradient(90deg, #1f2420 120px, #626963 120px);
  -webkit-background-clip: text;
  background-clip: text;
}

.omni-btn { width: 48px; height: 48px; }
.react-ext { color: #fff; }

.ext-new { position: relative; }

.badge-new {
  position: absolute;
  left: 9px;
  top: 25px;
  width: 37px;
  height: 22px;
  border-radius: 6px;
  background: #c9281c;
  color: #fff;
  font: 700 14px/24px "Open Sans", sans-serif;
}

.divider {
  width: 3px;
  height: 24px;
  margin: 0 12px;
  background: #7abb7c;
}

.profile {
  width: 30px;
  height: 30px;
  border-radius: 50%;
  background: #004d40;
  color: #fff;
  font-size: 17px;
  line-height: 30px;
}

.bookmarks {
  display: flex;
  align-items: center;
  height: 60px;
  padding: 0 21px 0 28px;
  background: #c5e1c6;
  color: #1f2420;
  font: 17px/24px "Open Sans", sans-serif;
}

.bm-divider { width: 3px; height: 24px; margin: 0 21px; background: #7abb7c; }
.bm-divider.push { margin: 0 24px 0 auto; }
.bm { display: flex; align-items: center; gap: 10px; margin-right: 28px; white-space: nowrap; }
.bm.folder { gap: 12px; }
.bm:last-child { margin-right: 0; }
.bm svg { width: 24px; height: 24px; }

/* Page area */
.viewport { flex: 1; min-height: 0; display: flex; }
.page { flex: 1; min-width: 0; display: flex; flex-direction: column; }

.scrollbar {
  width: 24px;
  display: flex;
  flex-direction: column;
  align-items: center;
  padding: 10px 1px 9px 2px;
}

.thumb {
  width: 100%;
  flex: none;
  height: 535px;
  margin: 9px 0 auto;
  background: #a8a8a8;
}

.masthead {
  height: 105px;
  flex: none;
  display: flex;
  align-items: center;
  padding: 0 12px 0 50px;
}

.start, .end { flex: 1; display: flex; align-items: center; }
.guide { margin-right: 49px; }

.logo {
  display: flex;
  align-items: center;
  gap: 3px;
  color: #fff;
  font: 700 30px/37px Roboto, sans-serif;
}

.search { display: flex; width: 1230px; }

.search input {
  flex: 1;
  height: 75px;
  border: 1px solid #303030;
  border-right: 0;
  border-radius: 38px 0 0 38px;
  background: #121212;
  padding: 0 30px;
  color: #fff;
  font: 30px/40px Roboto, sans-serif;
}
.search input::placeholder { color: #888; opacity: 1; }

.go {
  width: 120px;
  height: 75px;
  border: 1px solid #303030;
  border-radius: 0 38px 38px 0;
  background: #222;
}

.mic { width: 75px; height: 75px; border-radius: 50%; background: #272727; margin-left: 30px; }

.end { justify-content: flex-end; }

.create {
  height: 68px;
  border-radius: 34px;
  padding: 0 31px 0 18px;
  gap: 12px;
  background: #272727;
  color: #fff;
  font-size: 26px;
  font-weight: 500;
}

.bell { position: relative; width: 75px; height: 75px; margin: 0 41px 0 15px; }

.count {
  position: absolute;
  left: 39px;
  top: 9px;
  height: 34px;
  padding: 0 6px;
  border: 2px solid #0f0f0f;
  border-radius: 17px;
  background: #e1002d;
  color: #fff;
  font-size: 23px;
  line-height: 29px;
}

.me {
  width: 60px;
  height: 60px;
  margin-right: 44px;
  border-radius: 50%;
  background: #78909c;
  color: #fff;
  font-size: 34px;
}

/* Player */
.theater {
  position: relative;
  flex: none;
  height: calc(100vh - 498px);
  background: #000;
}

.slide {
  height: 100%;
  aspect-ratio: 16 / 9;
  margin: 0 auto;
  padding: 231px 0 0;
  display: flex;
  flex-direction: column;
  background: #fff;
  color: #111;
  font-family: Lato, sans-serif;
  font-variant-ligatures: none;
}

.slide h2 {
  margin: 0 243px 0 284px;
  padding-bottom: 22px;
  border-bottom: 3px solid #8d8d8d;
  color: #404040;
  -webkit-text-stroke: 2px #404040;
  font-weight: 300;
  font-size: 133px;
  line-height: 160px;
}

.slide table {
  width: 1676px;
  margin: 99px 0 0 639px;
  table-layout: fixed;
  border-collapse: separate;
  border-spacing: 0;
  font-size: 42px;
  line-height: 58px;
  color: #14202c;
}

.slide th {
  padding: 5px 20px 8px 14px;
  background: #0f9fe8;
  color: #fff;
  font-weight: 700;
  border-right: 2px solid #fff;
  border-bottom: 7px solid #fff;
}

.slide td {
  padding: 4px 16px 9px 18px;
  vertical-align: top;
  background: #cbe0f5;
  border-right: 2px solid #fff;
  border-bottom: 2px solid #fff;
}
.slide tr:nth-child(2) td { background: #e6eff9; padding-bottom: 14px; }

.points {
  display: flex;
  flex-direction: column;
  gap: 36px;
  margin: 145px 0 0 284px;
  font-size: 52px;
  line-height: 64px;
}

.band {
  margin-top: auto;
  height: 131px;
  border-top: 17px solid #0fa0ea;
  border-bottom: 3px solid #001226;
  background: #1b7dc9;
}

.watermark { position: absolute; right: 24px; bottom: 29px; }

/* Below the player */
.below {
  flex: 1;
  min-height: 0;
  overflow: hidden;
  display: flex;
  gap: 45px;
  padding: 0 259px 0 260px;
}
.primary { flex: 1; min-width: 0; padding-top: 23px; }

.primary h1 {
  font-size: 37px;
  line-height: 52px;
  font-weight: 700;
}

.meta { display: flex; align-items: flex-end; margin-top: 14px; }
.owner { margin: 0 46px 0 22px; }

.channel {
  display: flex;
  align-items: center;
  gap: 11px;
  font-size: 30px;
  line-height: 38px;
  font-weight: 500;
}

.subs { display: block; margin-top: 3px; color: #aaa; font-size: 22px; line-height: 30px; }

.pill {
  height: 68px;
  padding: 0 31px 0 18px;
  gap: 12px;
  border-radius: 34px;
  background: #272727;
  font-size: 26px;
  font-weight: 500;
}
.pill svg, .icon svg { width: 45px; height: 45px; }
.subscribed { padding-right: 19px; }

.actions { display: flex; gap: 15px; margin-left: auto; }
.rate { display: flex; align-items: center; border-radius: 34px; background: #272727; }
.like { padding-right: 28px; }
.dislike { padding: 0 31px 0 24px; position: relative; }
.dislike::before {
  content: "";
  position: absolute;
  left: 0;
  top: 12px;
  width: 2px;
  height: 45px;
  background: #4a4a4a;
}
.dislike svg { transform: rotate(180deg); }
.more { width: 68px; padding: 0; }

.description {
  height: 200px;
  margin-top: 28px;
  border-radius: 22px;
  background: #272727;
}

.playlist {
  width: 753px;
  height: 400px;
  margin-top: 45px;
  padding: 26px 26px 0 31px;
  border: 1px solid #3f3f3f;
  border-radius: 22px;
  background: #212121;
}

.pl-head { display: flex; align-items: center; justify-content: space-between; }
.playlist h3 { font-size: 36px; line-height: 48px; font-weight: 700; }
.playlist p { margin-top: 8px; color: #aaa; font-size: 22px; line-height: 30px; }
.pl-tools { display: flex; gap: 30px; margin-top: 13px; }
.icon.menu { margin-left: auto; }
```
